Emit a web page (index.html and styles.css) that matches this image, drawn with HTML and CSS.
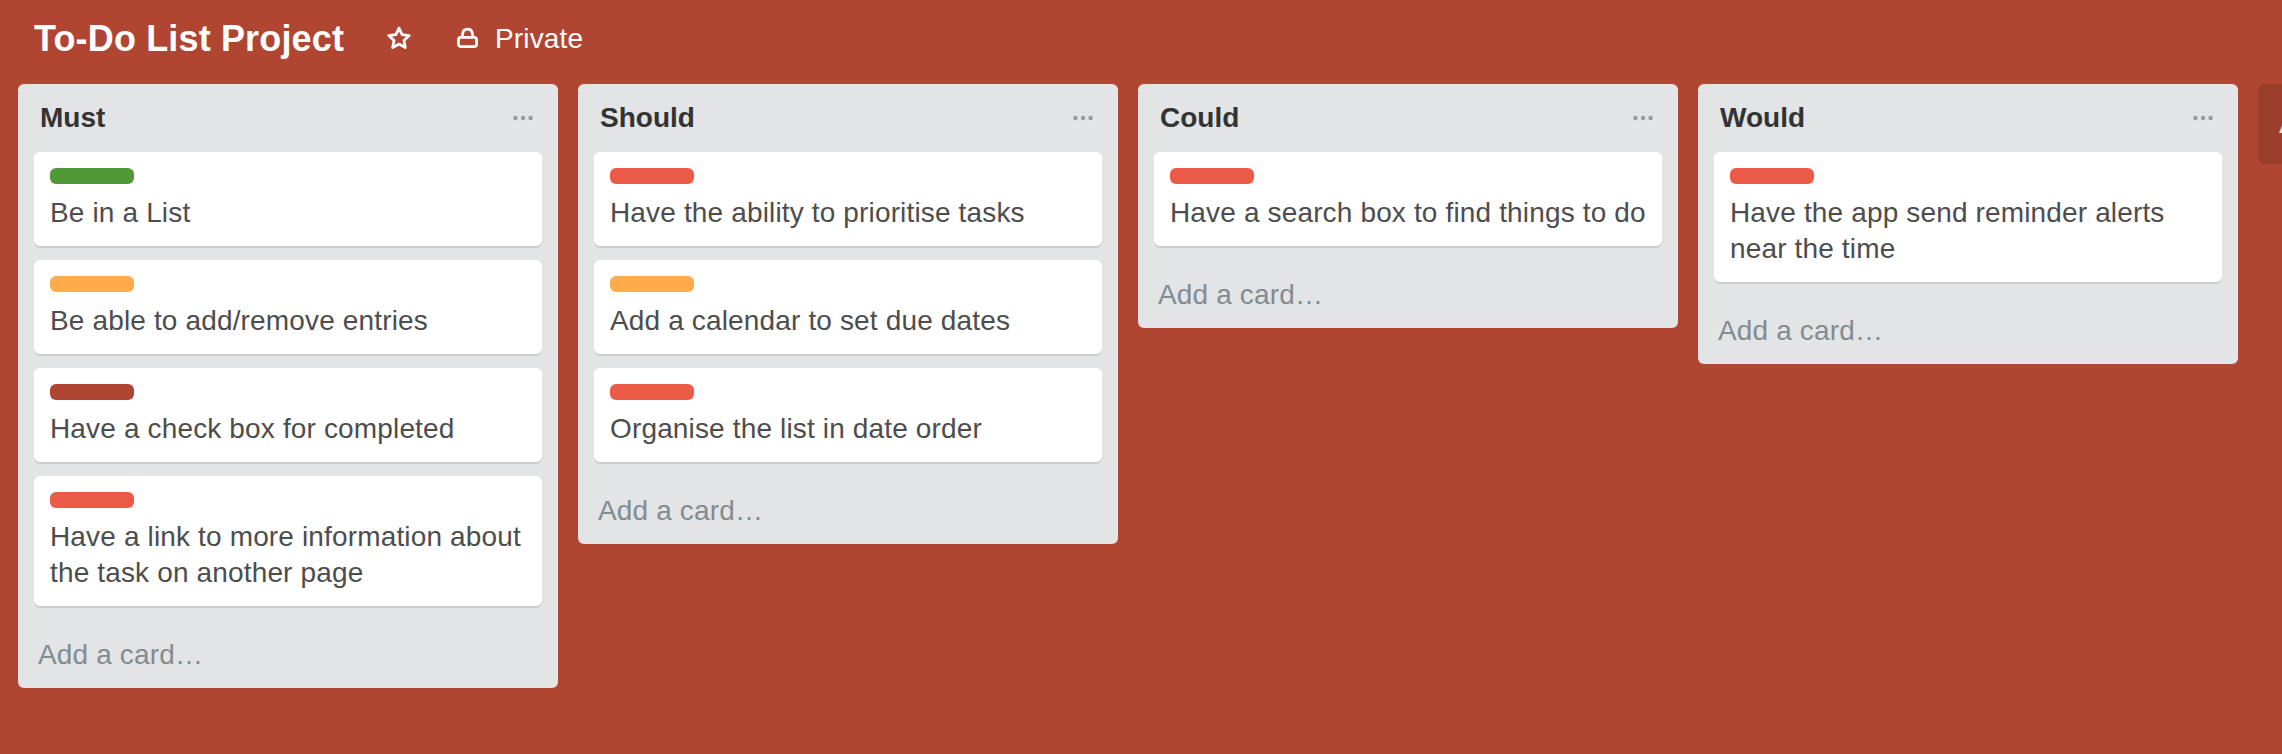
FILE: index.html
```html
<!DOCTYPE html>
<html lang="en">
<head>
<meta charset="utf-8">
<title>To-Do List Project</title>
<link rel="stylesheet" href="styles.css">
</head>
<body>
<header class="board-header">
  <h1 class="board-title">To-Do List Project</h1>
  <svg class="star" viewBox="1.6 1.4 20.8 20" width="24" height="23" aria-hidden="true"><path d="M12 3.2l2.7 5.7 6.2.8-4.6 4.3 1.2 6.2L12 17.1l-5.5 3.1 1.2-6.2-4.6-4.3 6.2-.8z"/></svg>
  <svg class="lock" viewBox="0 0 21 21" width="21" height="21" aria-hidden="true"><rect x="1.4" y="10.4" width="18.2" height="9.2" rx="2.6"/><path d="M5 10.4l.9-5A4.7 4 0 0 1 15.1 5.4l.9 5"/></svg>
  <span class="privacy">Private</span>
</header>
<main class="board">
  <section class="list">
    <div class="list-head"><h2>Must</h2><svg class="more" viewBox="0 0 20 6" width="20" height="6" aria-hidden="true"><circle cx="2.4" cy="3" r="2.2"/><circle cx="10" cy="3" r="2.2"/><circle cx="17.6" cy="3" r="2.2"/></svg></div>
    <div class="cards">
      <article class="card"><span class="label green"></span><p>Be in a List</p></article>
      <article class="card"><span class="label orange"></span><p>Be able to add/remove entries</p></article>
      <article class="card"><span class="label brick"></span><p>Have a check box for completed</p></article>
      <article class="card"><span class="label red"></span><p>Have a link to more information about the task on another page</p></article>
    </div>
    <div class="add">Add a card…</div>
  </section>
  <section class="list">
    <div class="list-head"><h2>Should</h2><svg class="more" viewBox="0 0 20 6" width="20" height="6" aria-hidden="true"><circle cx="2.4" cy="3" r="2.2"/><circle cx="10" cy="3" r="2.2"/><circle cx="17.6" cy="3" r="2.2"/></svg></div>
    <div class="cards">
      <article class="card"><span class="label red"></span><p>Have the ability to prioritise tasks</p></article>
      <article class="card"><span class="label orange"></span><p>Add a calendar to set due dates</p></article>
      <article class="card"><span class="label red"></span><p>Organise the list in date order</p></article>
    </div>
    <div class="add">Add a card…</div>
  </section>
  <section class="list">
    <div class="list-head"><h2>Could</h2><svg class="more" viewBox="0 0 20 6" width="20" height="6" aria-hidden="true"><circle cx="2.4" cy="3" r="2.2"/><circle cx="10" cy="3" r="2.2"/><circle cx="17.6" cy="3" r="2.2"/></svg></div>
    <div class="cards">
      <article class="card"><span class="label red"></span><p>Have a search box to find things to do</p></article>
    </div>
    <div class="add">Add a card…</div>
  </section>
  <section class="list">
    <div class="list-head"><h2>Would</h2><svg class="more" viewBox="0 0 20 6" width="20" height="6" aria-hidden="true"><circle cx="2.4" cy="3" r="2.2"/><circle cx="10" cy="3" r="2.2"/><circle cx="17.6" cy="3" r="2.2"/></svg></div>
    <div class="cards">
      <article class="card"><span class="label red"></span><p>Have the app send reminder alerts near the time</p></article>
    </div>
    <div class="add">Add a card…</div>
  </section>
  <section class="add-list">Add a list…</section>
</main>
</body>
</html>
```
FILE: styles.css
```css
* { box-sizing: border-box; }
html, body { margin: 0; height: 100%; }
body {
  background: #b04632;
  font-family: "Liberation Sans", Arial, sans-serif;
  overflow: hidden;
}
.board-header {
  display: flex;
  align-items: center;
  height: 84px;
  padding: 0 0 6px 34px;
  color: #fff;
}
.board-title {
  margin: 0 43px 0 0;
  font-size: 36px;
  line-height: 44px;
  font-weight: 700;
  letter-spacing: 0.15px;
}
.star {
  fill: none;
  stroke: #fff;
  stroke-width: 2.4;
  stroke-linejoin: round;
  margin: 0 46px 3px 0;
}
.lock {
  fill: none;
  stroke: #fff;
  stroke-width: 2.8;
  stroke-linejoin: round;
  margin: 0 17px 3px 0;
}
.privacy { font-size: 28px; line-height: 36px; letter-spacing: 0.15px; }
.board {
  display: flex;
  align-items: flex-start;
  gap: 20px;
  padding-left: 18px;
}
.list {
  flex: 0 0 540px;
  background: #e2e4e6;
  border-radius: 6px;
}
.list-head {
  display: flex;
  align-items: center;
  justify-content: space-between;
  height: 68px;
  padding: 0 25px 0 22px;
}
.list-head h2 {
  margin: 0;
  font-size: 28px;
  line-height: 36px;
  font-weight: 700;
  color: #333;
}
.more { fill: #999; }
.cards {
  display: flex;
  flex-direction: column;
  gap: 14px;
  padding: 0 16px;
}
.card {
  background: #fff;
  border-radius: 6px;
  box-shadow: 0 2px 0 #ccc;
  padding: 16px 16px 15px;
}
.label {
  display: block;
  width: 84px;
  height: 16px;
  border-radius: 6px;
  margin-bottom: 11px;
}
.green { background: #519839; }
.orange { background: #ffab4a; }
.brick { background: #b04632; }
.red { background: #eb5a46; }
.card p {
  margin: 0;
  font-size: 28px;
  line-height: 36px;
  letter-spacing: 0.15px;
  color: #4d4d4d;
}
.add {
  margin-top: 14px;
  padding: 17px 20px 15px;
  font-size: 28px;
  line-height: 36px;
  letter-spacing: 0.15px;
  color: #838c91;
}
.add-list {
  flex: 0 0 540px;
  height: 80px;
  padding: 22px 21px;
  background: #9c3e2c;
  border-radius: 6px;
  font-size: 28px;
  line-height: 36px;
  color: #f0dcd8;
}
```
